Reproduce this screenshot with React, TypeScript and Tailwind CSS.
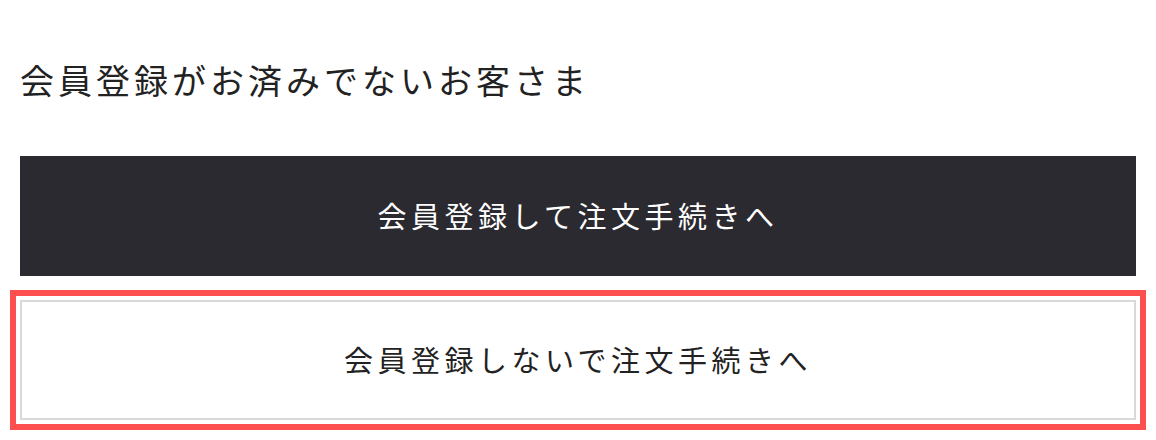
export default function App() {
  return (
    <div
      className="min-h-[440px] bg-white px-5 pt-[60px] text-[#222]"
      style={{ fontFamily: '"Noto Sans CJK JP", "Noto Sans", sans-serif' }}
    >
      <h2 className="text-[34px] leading-[40px] font-normal tracking-[4px]">
        会員登録がお済みでないお客さま
      </h2>

      <div className="mt-[56px] flex flex-col gap-6">
        <button className="flex h-[120px] w-full items-center justify-center bg-[#2b2a30] text-[29px] tracking-[4.5px] text-white">
          会員登録して注文手続きへ
        </button>
        <button className="flex h-[120px] w-full items-center justify-center border-2 border-[#d9d9d9] bg-white text-[29px] tracking-[4.5px] text-[#222] outline-[6px] outline-offset-4 outline-[#fe4f50] outline-solid">
          会員登録しないで注文手続きへ
        </button>
      </div>
    </div>
  );
}
